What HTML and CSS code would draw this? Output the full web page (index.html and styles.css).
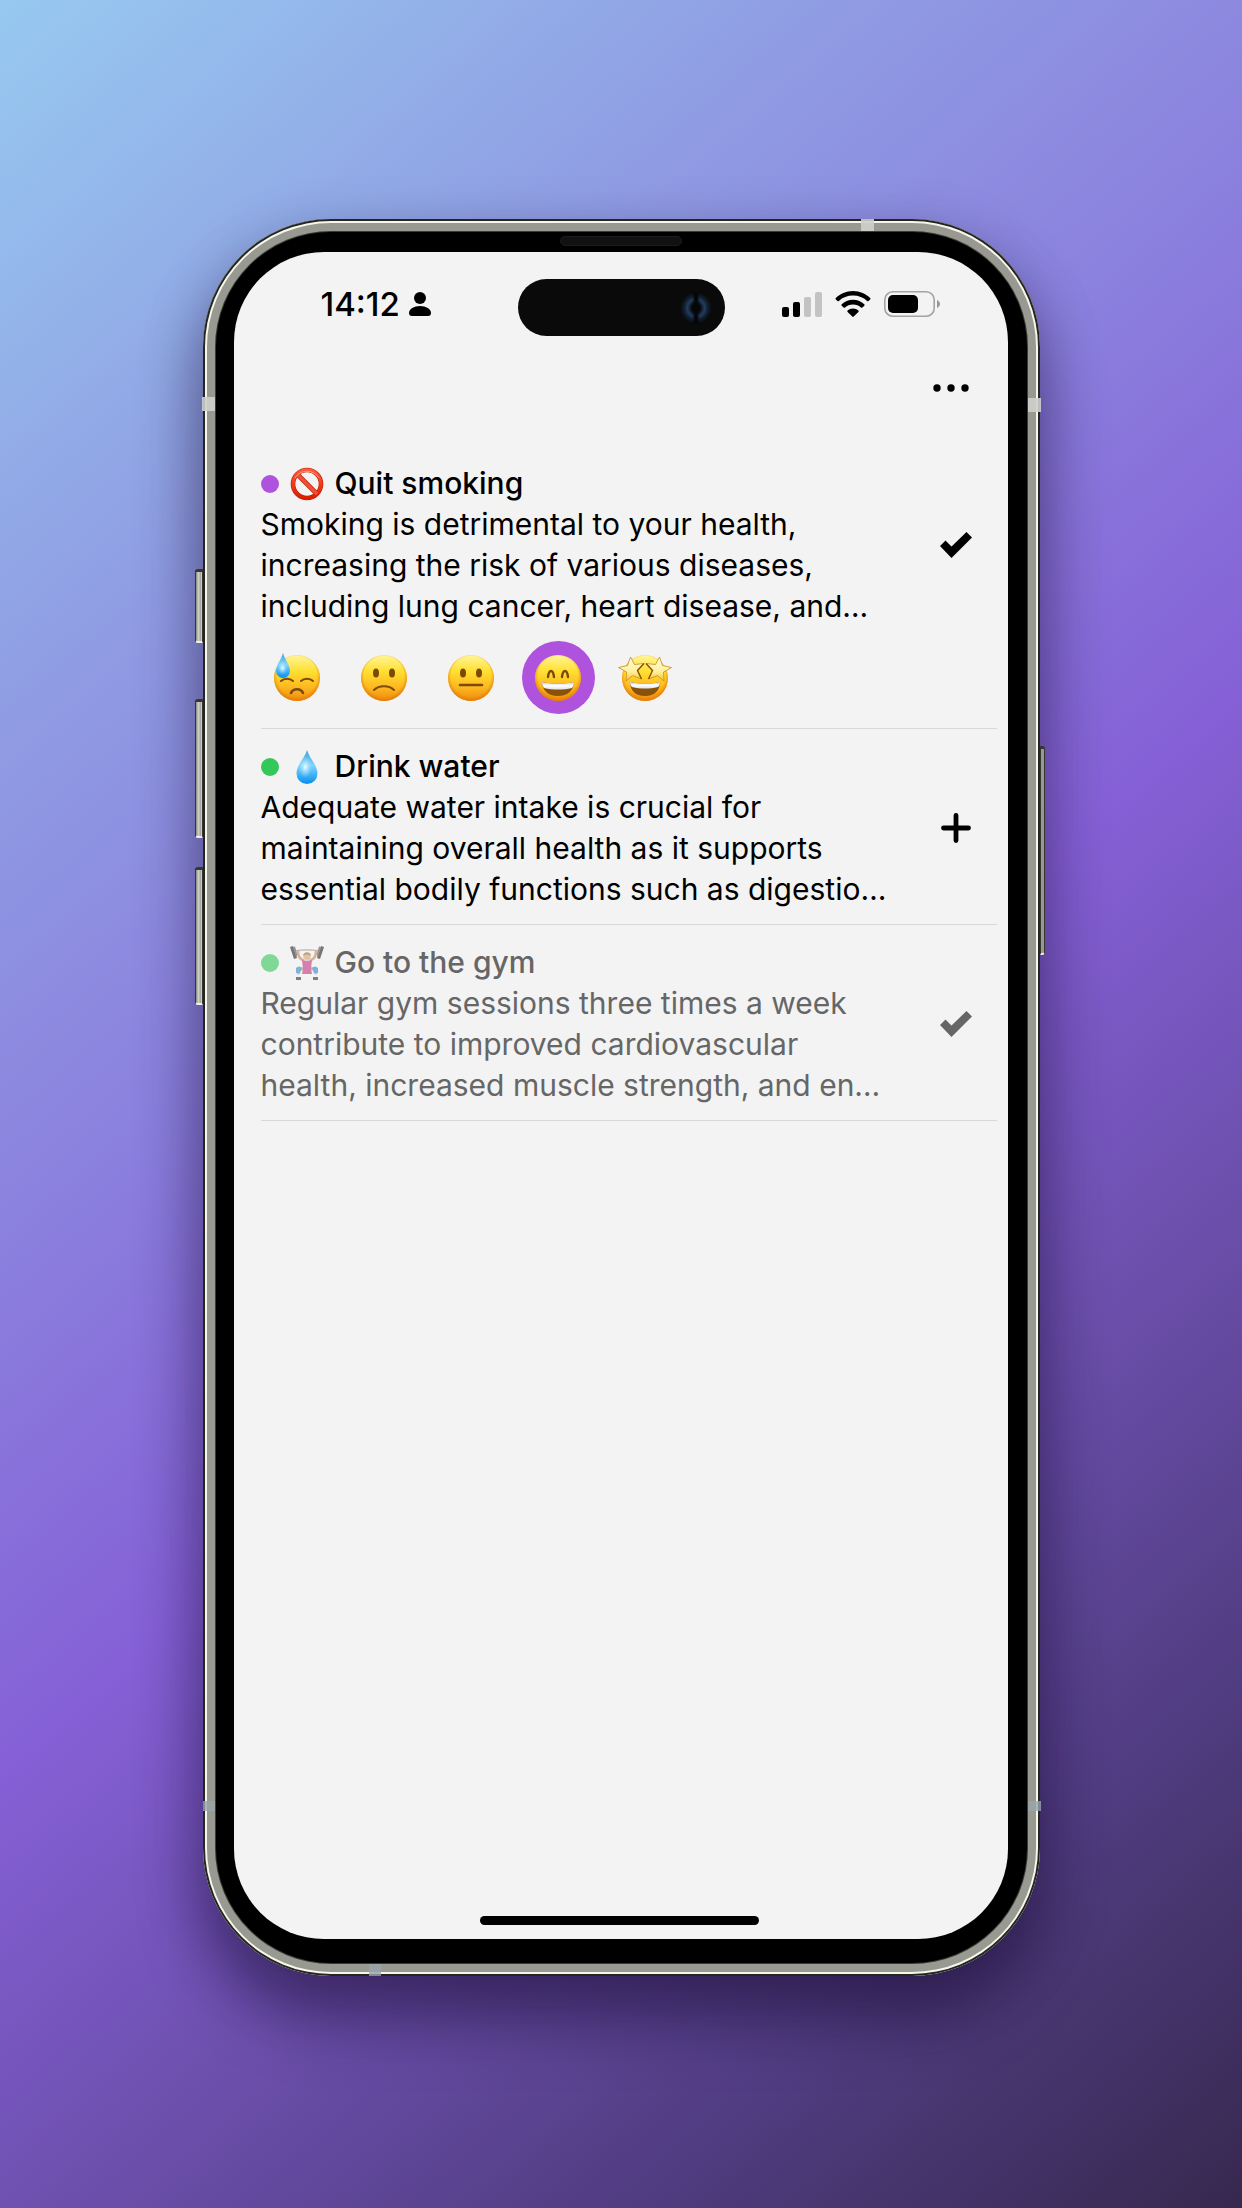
FILE: index.html
```html
<!DOCTYPE html>
<html lang="en">
<head>
<meta charset="utf-8">
<meta name="viewport" content="width=device-width, initial-scale=1">
<title>Habits</title>
<link rel="stylesheet" href="styles.css">
</head>
<body>
<svg class="defs" aria-hidden="true">
  <defs>
    <linearGradient id="face" x1="0" y1="0" x2="0" y2="1">
      <stop offset="0" stop-color="#fff59a"/><stop offset=".35" stop-color="#ffe032"/><stop offset=".7" stop-color="#fdb81f"/><stop offset="1" stop-color="#f08a12"/>
    </linearGradient>
    <radialGradient id="rim" cx=".5" cy=".46" r=".54">
      <stop offset=".8" stop-color="#e88708" stop-opacity="0"/><stop offset="1" stop-color="#df7a04" stop-opacity=".9"/>
    </radialGradient>
    <linearGradient id="water" x1="0" y1="0" x2="0" y2="1">
      <stop offset="0" stop-color="#3f9fdc"/><stop offset=".45" stop-color="#7fd6fb"/><stop offset="1" stop-color="#058fee"/>
    </linearGradient>
    <radialGradient id="shine" cx=".45" cy=".5" r=".5">
      <stop offset="0" stop-color="#effcff"/><stop offset="1" stop-color="#8fdcff" stop-opacity="0"/>
    </radialGradient>
    <linearGradient id="star" x1="0" y1="0" x2="0" y2="1">
      <stop offset="0" stop-color="#fffbe0"/><stop offset=".6" stop-color="#fff0a0"/><stop offset="1" stop-color="#f5c52c"/>
    </linearGradient>
    <linearGradient id="teeth" x1="0" y1="0" x2="0" y2="1">
      <stop offset="0" stop-color="#c8ccd2"/><stop offset=".5" stop-color="#fff"/><stop offset="1" stop-color="#dfe2e6"/>
    </linearGradient>
    <linearGradient id="red" x1="0" y1="0" x2="0" y2="1">
      <stop offset="0" stop-color="#ff5a3c"/><stop offset="1" stop-color="#dc1e00"/>
    </linearGradient>
    <symbol id="ball" viewBox="0 0 48 48"><circle cx="24" cy="24" r="23" fill="url(#face)"/><circle cx="24" cy="24" r="23" fill="url(#rim)"/></symbol>
    <symbol id="check" viewBox="0 0 32 26"><path d="M0 14 5.500 8.500 11.500 14.500 26.500 0 32 5.500 11.500 26Z" fill="currentColor"/></symbol>
  </defs>
</svg>

<main class="stage">
  <div class="phone">
    <span class="side-button side-button--action"></span>
    <span class="side-button side-button--up"></span>
    <span class="side-button side-button--down"></span>
    <span class="side-button side-button--power"></span>
    <span class="band band--top"></span>
    <span class="band band--left"></span>
    <span class="band band--right"></span>
    <span class="band band--low-left"></span>
    <span class="band band--low-right"></span>
    <span class="band band--bottom"></span>
    <span class="speaker"></span>

    <div class="screen">
      <header class="status">
        <div class="status__clock">
          <time>14:12</time>
          <svg class="person" viewBox="0 0 22 24" aria-hidden="true"><circle cx="11" cy="6" r="6"/><path d="M0 21C0 17 5 14 11 14s11 3 11 7c0 2-1 3-3 3H3c-2 0-3-1-3-3Z"/></svg>
        </div>
        <div class="island"><span class="lens"></span></div>
        <div class="status__icons">
          <svg class="signal" viewBox="0 0 40 26" aria-hidden="true"><rect y="16" width="7" height="10" rx="2"/><rect x="11" y="11" width="7" height="15" rx="2"/><g fill="#c3c3c3"><rect x="22" y="6" width="7" height="20" rx="2"/><rect x="33" y="1" width="7" height="25" rx="2"/></g></svg>
          <svg class="wifi" viewBox="0 0 36 26" aria-hidden="true"><path d="M18 0C11 0 5 3 .8 7a1 1 0 0 0 0 1.400L2.500 10a1 1 0 0 0 1.400 0C7.500 6.600 12.500 4.600 18 4.600s10.500 2 14.100 5.400a1 1 0 0 0 1.400 0l1.700-1.600a1 1 0 0 0 0-1.400C31 3 25 0 18 0ZM18 8.800c-4.500 0-8.500 1.800-11.300 4.500a1 1 0 0 0 0 1.400l1.900 1.800a1 1 0 0 0 1.400 0c2-2 4.800-3.100 8-3.100s6 1.100 8 3.100a1 1 0 0 0 1.400 0l1.900-1.800a1 1 0 0 0 0-1.400C26.500 10.600 22.500 8.800 18 8.800ZM18 17.500c-2.100 0-4 .8-5.400 2a1 1 0 0 0 0 1.400l4.700 4.700a1 1 0 0 0 1.400 0l4.700-4.700a1 1 0 0 0 0-1.400c-1.400-1.200-3.300-2-5.400-2Z"/></svg>
          <svg class="battery" viewBox="0 0 57 26" aria-hidden="true"><rect x=".8" y=".8" width="49.400" height="24.400" rx="8" fill="none" stroke="#a3a3a3" stroke-width="1.600"/><rect x="4" y="4" width="30" height="18" rx="5"/><path d="M53 9c2 .8 3 2.300 3 4s-1 3.200-3 4Z" fill="#999"/></svg>
        </div>
      </header>

      <div class="toolbar">
        <button class="icon-button" type="button" aria-label="More"><svg class="more" viewBox="0 0 36 8" aria-hidden="true"><circle cx="4" cy="4" r="3.700"/><circle cx="18" cy="4" r="3.700"/><circle cx="32" cy="4" r="3.700"/></svg></button>
      </div>

      <ul class="habits">
        <li class="habit">
          <div class="habit__row">
            <div class="habit__text">
              <h2 class="habit__title"><span class="dot dot--purple"></span>
                <svg class="emoji" viewBox="0 0 34 34" aria-hidden="true"><g fill="none" stroke="#c51c04" stroke-width="4.600"><circle cx="17" cy="17" r="14"/><path d="m7.500 7.500 19 19"/></g><g fill="none" stroke="url(#red)" stroke-width="3.400"><circle cx="17" cy="17" r="14"/></g><path d="m7 7 20 20" stroke="#ed5138" stroke-width="3.400"/><path d="M5 11A14 14 0 0 1 29 11" fill="none" stroke="#ff9c85" stroke-width="1"/></svg>
                Quit smoking</h2>
              <p class="habit__note">Smoking is detrimental to your health,<br>increasing the risk of various diseases,<br>including lung cancer, heart disease, and…</p>
            </div>
            <button class="icon-button" type="button" aria-label="Done"><svg class="check"><use href="#check"/></svg></button>
          </div>
          <div class="moods">
            <button class="mood" type="button" aria-label="Exhausted">
              <svg viewBox="0 0 48 48"><use href="#ball"/><g fill="none" stroke="#7c4a06" stroke-width="2" stroke-linecap="round"><path d="M8 27c3-3 9-3 12 0M28 27c3-3 9-3 12 0"/><path d="M18 39c2-5 10-5 12 0" stroke-width="2.500"/></g><path d="M10-1C8 6 3 11 3 17a7 7 0 0 0 14 0C17 11 12 6 10-1Z" fill="url(#water)"/><ellipse cx="10" cy="14" rx="5" ry="7" fill="url(#shine)"/></svg>
            </button>
            <button class="mood" type="button" aria-label="Sad">
              <svg viewBox="0 0 48 48"><use href="#ball"/><g fill="#7c4a06"><ellipse cx="16" cy="19" rx="3" ry="4.600"/><ellipse cx="32" cy="19" rx="3" ry="4.600"/></g><path d="M14 36c5-5 15-5 20 0" fill="none" stroke="#7c4a06" stroke-width="2" stroke-linecap="round"/></svg>
            </button>
            <button class="mood" type="button" aria-label="Neutral">
              <svg viewBox="0 0 48 48"><use href="#ball"/><g fill="#7c4a06"><ellipse cx="16" cy="19" rx="3" ry="4.600"/><ellipse cx="32" cy="19" rx="3" ry="4.600"/></g><path d="M13 31h22" stroke="#7c4a06" stroke-width="2.600" stroke-linecap="round"/></svg>
            </button>
            <button class="mood mood--selected" type="button" aria-label="Happy" aria-pressed="true">
              <svg viewBox="0 0 48 48"><use href="#ball"/><path d="M14 23c1-8 5-8 6 0M28 23c1-8 5-8 6 0" fill="none" stroke="#7c4a06" stroke-width="2.400" stroke-linecap="round"/><path d="M8 28c9 2 23 2 32 0 0 8-6 14-16 14S8 36 8 28Z" fill="#8a5208"/><path d="M8 28c9 2 23 2 32 0 0 3-1 5-2 6-9 2-19 2-28 0-1-1-2-3-2-6Z" fill="url(#teeth)"/></svg>
            </button>
            <button class="mood" type="button" aria-label="Thrilled">
              <svg viewBox="0 0 48 48"><use href="#ball"/><path d="M9 28c9 2 21 2 30 0 0 8-5 14-15 14S9 36 9 28Z" fill="#8a5208"/><path d="M9 28c9 2 21 2 30 0 0 3-1 4-2 5-9 2-17 2-26 0-1-1-2-2-2-5Z" fill="url(#teeth)"/><g fill="url(#star)" stroke="#c88a1c" stroke-width=".8" stroke-linejoin="round"><path d="m9.500 3 4 7.500 9.500-1-6.500 7 4 8.500-9-3.500-6.500 5.500.5-9-8-4.500 9-2Z"/><path d="m38.500 3-4 7.500-9.500-1 6.500 7-4 8.500 9-3.500 6.500 5.500-.5-9 8-4.500-9-2Z"/></g><path d="m23 9.500-6.500 7 4 8.500M25 9.500l6.500 7-4 8.500" fill="none" stroke="#8a5208" stroke-width="1.400"/></svg>
            </button>
          </div>
        </li>

        <li class="habit">
          <div class="habit__row">
            <div class="habit__text">
              <h2 class="habit__title"><span class="dot dot--green"></span>
                <svg class="emoji" viewBox="0 0 34 34" aria-hidden="true"><path d="M17 0C15 8 6.500 15 6.500 23.500a10.500 10.500 0 0 0 21 0C27.500 15 19 8 17 0Z" fill="url(#water)"/><ellipse cx="16" cy="17" rx="7" ry="11" fill="url(#shine)"/></svg>
                Drink water</h2>
              <p class="habit__note">Adequate water intake is crucial for<br>maintaining overall health as it supports<br>essential bodily functions such as digestio…</p>
            </div>
            <button class="icon-button" type="button" aria-label="Add"><svg class="plus" viewBox="0 0 30 30" aria-hidden="true"><path d="M15 2.500v25M2.500 15h25" stroke="currentColor" stroke-width="4.800" stroke-linecap="round"/></svg></button>
          </div>
        </li>

        <li class="habit habit--muted">
          <div class="habit__row">
            <div class="habit__text">
              <h2 class="habit__title"><span class="dot dot--green"></span>
                <svg class="emoji" viewBox="0 0 34 34" aria-hidden="true"><path d="M4 5c8-1.500 18-1.500 26 0" fill="none" stroke="#777" stroke-width="1"/><g fill="#242424"><path d="M0 1 3 0 7 12 4 13ZM34 1 31 0 27 12 30 13Z"/></g><g fill="#555"><path d="m3 1 2-.5L7.500 9 6 11ZM31 1l-2-.5L26.500 9l1.500 2Z"/></g><path d="M8 5c0 6 2 8 5 9M26 5c0 6-2 8-5 9" fill="none" stroke="#c58a5c" stroke-width="2.600" stroke-linecap="round"/><circle cx="17" cy="10.500" r="3.600" fill="#d8a070"/><path d="M13 10c0-5 8-5 8 0-2-2-6-2-8 0Z" fill="#9a6a3a"/><path d="M9 28c-2-4 1-6 5-5M25 28c2-4-1-6-5-5" fill="none" stroke="#c58a5c" stroke-width="3"/><path d="M12 14c3 1 7 1 10 0l-1 9 1 5H12l1-5Z" fill="#c2357d"/><path d="M6 22c2-2 4-2 6 0l-2 5H6ZM28 22c-2-2-4-2-6 0l2 5h4Z" fill="#2d8ac8"/><path d="M6 31h5v3H6ZM23 31h5v3h-5Z" fill="#333"/></svg>
                Go to the gym</h2>
              <p class="habit__note">Regular gym sessions three times a week<br>contribute to improved cardiovascular<br>health, increased muscle strength, and en…</p>
            </div>
            <button class="icon-button" type="button" aria-label="Done"><svg class="check"><use href="#check"/></svg></button>
          </div>
        </li>
      </ul>
      <span class="home-bar"></span>
    </div>
  </div>
</main>
</body>
</html>
```

FILE: styles.css
```css
* { box-sizing: border-box; }

body {
  margin: 0;
  font-family: Inter, "Liberation Sans", sans-serif;
  color: #000;
}

svg { display: block; overflow: visible; }

button {
  padding: 0;
  border: 0;
  background: none;
  color: inherit;
  font: inherit;
}

.defs { position: absolute; width: 0; height: 0; }

.stage {
  display: flex;
  justify-content: center;
  min-height: 100vh;
  padding: 219px 24px 232px;
  background: linear-gradient(139deg, #97c9f0 0%, #90a0e4 20%, #8b80de 38%, #8560d6 54%, #6c4fac 69%, #503c80 84%, #37284f 100%);
}

/* Device: nested rings of dark edge, highlight and titanium around the bezel */
.phone {
  position: relative;
  display: flex;
  width: 100%;
  max-width: 837px;
  padding: 33px 32px 37px 31px;
  border-radius: 128px;
  background: #000;
  box-shadow: inset 0 0 0 2px #24261f, inset 0 0 0 4px #f6f6ee, inset 0 0 0 12px #989991, inset 0 0 0 13px #3a3b36,
    0 44px 64px rgba(20, 8, 40, .4), 0 20px 60px rgba(20, 8, 50, .25);
}

.screen {
  display: flex;
  flex: 1;
  flex-direction: column;
  min-width: 0;
  padding: 0 11px 14px 27px;
  border-radius: 90px;
  background: #f3f3f3;
}

.side-button {
  position: absolute;
  left: -8px;
  width: 8px;
  border: 1px solid #34362f;
  border-top-width: 3px;
  border-bottom: 2px solid #f0f0e6;
  border-radius: 3px 0 0 3px;
  background: linear-gradient(90deg, #85877f, #cfd1c9 40%, #a0a29a 80%, #e8e8e0);
}
.side-button--action { top: 350px; height: 74px; }
.side-button--up { top: 480px; height: 139px; }
.side-button--down { top: 648px; height: 138px; }
.side-button--power {
  top: 527px;
  right: -5px;
  left: auto;
  width: 5px;
  height: 209px;
  border-radius: 0 3px 3px 0;
  background: #989991;
}

.band { position: absolute; background: #cfcfcd; opacity: .9; }
.band--top { top: 0; right: 166px; width: 13px; height: 12px; }
.band--left { top: 178px; left: -1px; width: 13px; height: 14px; }
.band--right { top: 179px; right: -1px; width: 13px; height: 14px; }
.band--low-left, .band--low-right, .band--bottom { background: #9aa5ab; opacity: .8; }
.band--low-left { bottom: 165px; left: 0; width: 12px; height: 10px; }
.band--low-right { right: -1px; bottom: 165px; width: 13px; height: 10px; }
.band--bottom { bottom: 0; left: 166px; width: 12px; height: 12px; }

.speaker {
  position: absolute;
  top: 17px;
  left: 50%;
  width: 122px;
  height: 10px;
  border: 1px solid #1c1c1c;
  border-radius: 5px;
  background: #111;
  transform: translateX(-50%);
}

.status {
  display: grid;
  grid-template-columns: 1fr 207px 1fr;
  align-items: center;
  height: 57px;
  margin: 27px 14px 0 0;
}
.status__clock {
  display: flex;
  align-items: center;
  gap: 9px;
  padding: 0 0 8px 60px;
  font-size: 33px;
  font-weight: 500;
  line-height: 40px;
}
.person { width: 22px; height: 24px; }
.status__icons {
  display: flex;
  align-items: center;
  justify-content: flex-end;
  gap: 13px;
  padding: 0 42px 8px 0;
}
.signal { width: 40px; height: 26px; }
.wifi { width: 36px; height: 26px; }
.battery { width: 57px; height: 26px; }

.island {
  display: flex;
  align-items: center;
  justify-content: flex-end;
  height: 57px;
  padding-right: 13px;
  border-radius: 29px;
  background: #0a0a0a;
}
.lens {
  width: 32px;
  height: 32px;
  border-radius: 50%;
  background:
    linear-gradient(90deg, transparent 38%, #050608 47%, #050608 53%, transparent 62%),
    radial-gradient(circle, #050608 18%, #233d5e 38%, #101c2c 54%, #0a0a0a 70%);
}

.toolbar {
  display: flex;
  justify-content: flex-end;
  margin-top: 32px;
}
.icon-button {
  display: flex;
  flex: none;
  align-items: center;
  justify-content: center;
  width: 82px;
  height: 40px;
}
.more { width: 36px; height: 8px; }
.toolbar .icon-button { margin-right: 5px; }

.habits {
  flex: 1;
  margin: 38px 0 0;
  padding: 0;
  list-style: none;
}
.habit {
  padding: 17px 0 14px;
  border-bottom: 1px solid #d8d8da;
}
.habit--muted { color: #666; }
.habit--muted .dot, .habit--muted .emoji { opacity: .6; }
.habit__row { display: flex; align-items: center; }
.habit__text { flex: 1; min-width: 0; white-space: nowrap; }
.habit__title {
  display: flex;
  align-items: center;
  gap: 11px;
  margin: 0;
  font-size: 30px;
  font-weight: 500;
  line-height: 41px;
}
.habit__note {
  margin: 0;
  font-size: 30px;
  line-height: 41px;
}
.dot { width: 18px; height: 18px; border-radius: 50%; }
.dot--purple { background: #af52de; }
.dot--green { background: #34c759; }
.emoji { width: 34px; height: 34px; }
.check { width: 32px; height: 26px; }
.plus { width: 30px; height: 30px; }

.moods { display: flex; gap: 14px; margin-top: 14px; }
.mood {
  display: flex;
  align-items: center;
  justify-content: center;
  width: 73px;
  height: 73px;
  border-radius: 50%;
}
.mood svg { width: 48px; height: 48px; }
.mood--selected { background: #af52de; }

.home-bar {
  align-self: center;
  width: 279px;
  height: 9px;
  margin-right: 18px;
  border-radius: 5px;
  background: #000;
}
```
